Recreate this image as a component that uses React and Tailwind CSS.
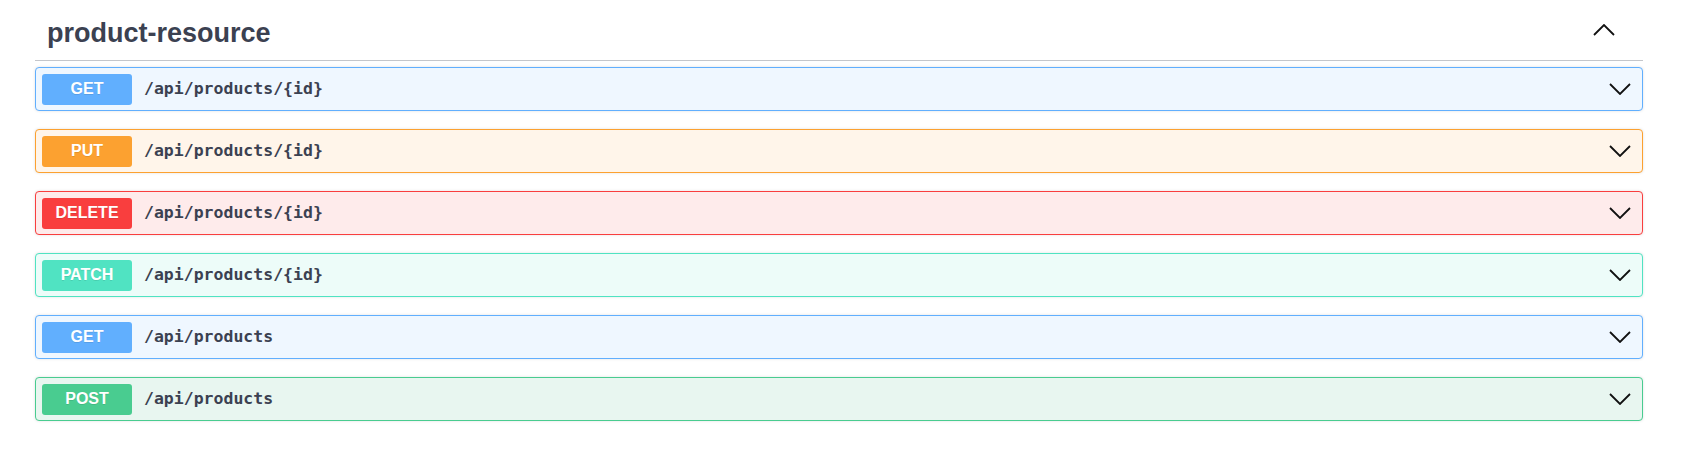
import React from 'react';

const ops = [
    { method: 'GET', path: '/api/products/{id}', badge: 'bg-[#61affe]', block: 'bg-[#eff7ff] border-[#61affe]' },
    { method: 'PUT', path: '/api/products/{id}', badge: 'bg-[#fca130]', block: 'bg-[#fff5ea] border-[#fca130]' },
    { method: 'DELETE', path: '/api/products/{id}', badge: 'bg-[#f93e3e]', block: 'bg-[#feebeb] border-[#f93e3e]' },
    { method: 'PATCH', path: '/api/products/{id}', badge: 'bg-[#50e3c2]', block: 'bg-[#edfcf9] border-[#50e3c2]' },
    { method: 'GET', path: '/api/products', badge: 'bg-[#61affe]', block: 'bg-[#eff7ff] border-[#61affe]' },
    { method: 'POST', path: '/api/products', badge: 'bg-[#49cc90]', block: 'bg-[#e8f6f0] border-[#49cc90]' },
];

const Chevron = ({ up }) => (
    <svg width="22" height="12" viewBox="0 0 22 12" className="shrink-0">
        <polyline
            points={up ? '1,11 11,1 21,11' : '1,1 11,11 21,1'}
            fill="none"
            stroke="#111"
            strokeWidth="1.8"
        />
    </svg>
);

const OpBlock = ({ method, path, badge, block }) => (
    <div className={`h-[44px] border rounded-[4px] flex items-center pl-[6px] pr-[11px] shadow-[0_0_3px_rgba(0,0,0,0.12)] ${block}`}>
        <div className={`w-[90px] h-[31px] rounded-[3px] flex items-center justify-center text-white font-bold text-[16px] font-['Liberation_Sans',Arial,sans-serif] [text-shadow:0_1px_0_rgba(0,0,0,0.1)] ${badge}`}>
            {method}
        </div>
        <span className="ml-[12px] flex-1 text-[#3b4151] font-bold text-[16.5px] font-['DejaVu_Sans_Mono',monospace]">
            {path}
        </span>
        <Chevron />
    </div>
);

export default function App() {
    return (
        <div className="w-[1686px] h-[463px] bg-white overflow-hidden">
            <div className="ml-[35px] w-[1608px]">
                {/* Tag header */}
                <div className="flex items-start justify-between pt-[18px] pb-[11px] pl-[12px] pr-[28px] border-b border-[#c4c6cb]">
                    <h4 className="text-[27px] leading-[31px] font-bold text-[#3b4151] font-['Liberation_Sans',Arial,sans-serif]">
                        product-resource
                    </h4>
                    <div className="pt-[6px]">
                        <Chevron up />
                    </div>
                </div>

                {/* Operations */}
                <div className="flex flex-col gap-[18px] mt-[6px]">
                    {ops.map((op, i) => (
                        <OpBlock key={i} {...op} />
                    ))}
                </div>
            </div>
        </div>
    );
}
